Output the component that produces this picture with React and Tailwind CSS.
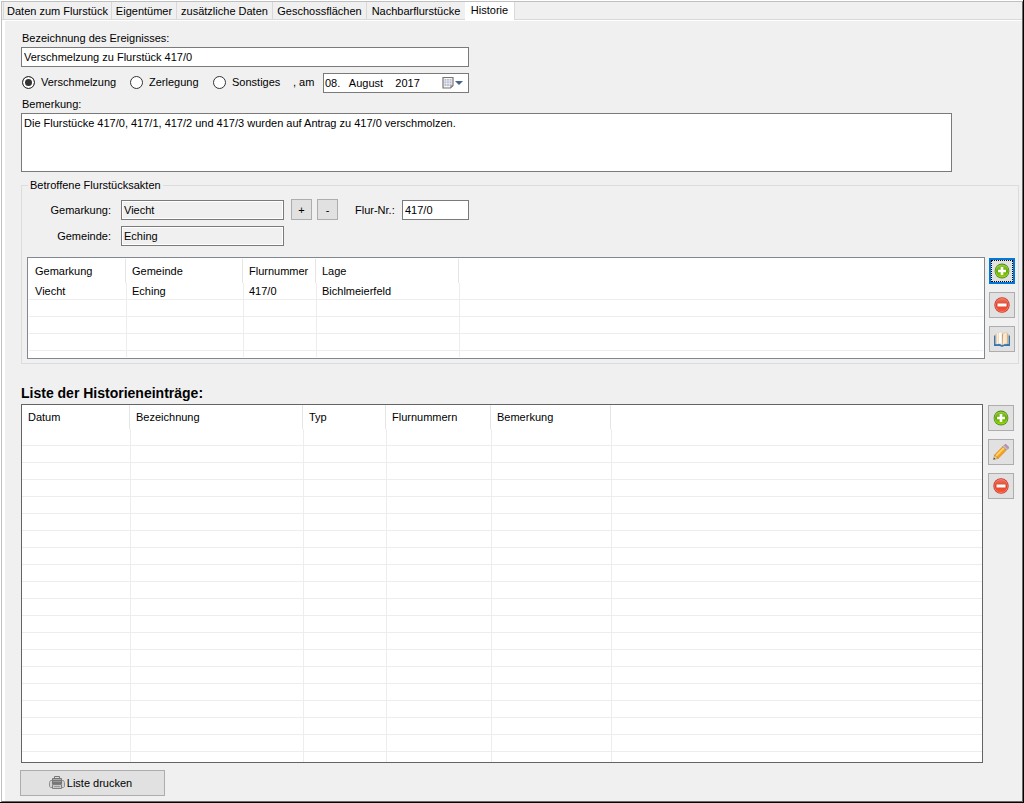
import React from "react";

const tabs = [
  { label: "Daten zum Flurstück", width: "w-[108px]" },
  { label: "Eigentümer", width: "w-[65px]" },
  { label: "zusätzliche Daten", width: "w-[96px]" },
  { label: "Geschossflächen", width: "w-[94px]" },
  { label: "Nachbarflurstücke", width: "w-[99px]" },
  { label: "Historie", width: "w-[50px]", active: true },
];

const parcelColumns = [
  { label: "Gemarkung", width: "w-[97px]" },
  { label: "Gemeinde", width: "w-[117px]" },
  { label: "Flurnummer", width: "w-[73px]" },
  { label: "Lage", width: "w-[143px]" },
];

const historyColumns = [
  { label: "Datum", width: "w-[108px]" },
  { label: "Bezeichnung", width: "w-[173px]" },
  { label: "Typ", width: "w-[83px]" },
  { label: "Flurnummern", width: "w-[105px]" },
  { label: "Bemerkung", width: "w-[120px]" },
];

function PlusIcon() {
  return (
    <svg width="16" height="16" viewBox="0 0 16 16" aria-hidden="true">
      <defs>
        <linearGradient id="plusFill" x1="0" y1="0" x2="0" y2="1">
          <stop offset="0" stopColor="#8fc93a" />
          <stop offset="0.5" stopColor="#62a800" />
          <stop offset="1" stopColor="#8fd400" />
        </linearGradient>
      </defs>
      <circle cx="8" cy="8" r="7.4" fill="#4b8a12" />
      <circle cx="8" cy="8" r="6.6" fill="#a5d455" />
      <circle cx="8" cy="8" r="6" fill="url(#plusFill)" />
      <path d="M6.700 4h2.600v2.700H12v2.600H9.300V12H6.700V9.300H4V6.700h2.700z" fill="#fff" />
    </svg>
  );
}

function MinusIcon() {
  return (
    <svg width="16" height="16" viewBox="0 0 16 16" aria-hidden="true">
      <defs>
        <linearGradient id="minusFill" x1="0" y1="0" x2="0" y2="1">
          <stop offset="0" stopColor="#f0735c" />
          <stop offset="0.5" stopColor="#dc432b" />
          <stop offset="1" stopColor="#ff5536" />
        </linearGradient>
      </defs>
      <circle cx="8" cy="8" r="7.7" fill="#c5352a" />
      <circle cx="8" cy="8" r="6.900" fill="#f58673" />
      <circle cx="8" cy="8" r="6.300" fill="url(#minusFill)" />
      <path d="M3.500 6.500h9v3h-9z" fill="#fff" />
    </svg>
  );
}

function BookIcon() {
  return (
    <svg width="16" height="16" viewBox="0 0 16 16" aria-hidden="true">
      <path d="M0 4.500h1.500V13H6l2 1 2-1h4.500V4.500H16V15h-6l-2 1-2-1H0z" fill="#2f78b7" />
      <path d="M1.500 3 4.500 2v10.500l-3 .8zM14.500 3l-2-1v10.500l2 .8z" fill="#d6ae7c" />
      <path d="M2.500 2.500 5 1.500V13l-2.500.3z" fill="#fbeeda" />
      <path d="M4.500 1.500 8 .8V14l-1.500-1.200-2-.3z" fill="#fffdf8" stroke="#dcc3a0" strokeWidth=".5" />
      <path d="M8 3.500 9 2.500V13l-1 1z" fill="#b68d5e" />
      <path d="M9 2.500 13 1.500v11.300l-2.500.2L8.500 14z" fill="#fcf0de" stroke="#d4b48c" strokeWidth=".5" />
      <path d="M11 3v9.500" stroke="#efdabc" strokeWidth=".8" />
    </svg>
  );
}

function PencilIcon() {
  return (
    <svg width="16" height="16" viewBox="0 0 16 16" aria-hidden="true">
      <path d="M.5 15.500 1.600 10.900 5.100 14.400z" fill="#efd2a0" stroke="#a9834f" strokeWidth=".6" />
      <path d="M.4 15.600 1 13.700 2.300 15z" fill="#333" />
      <path d="m1.600 10.900 8.400-8.400 3.500 3.500-8.400 8.400z" fill="#f9a11b" stroke="#c67817" strokeWidth=".6" />
      <path d="m2.500 11.200 7.900-7.900 1.200 1.200-7.900 7.900z" fill="#ffd36b" />
      <path d="m10 2.500 1.500-1.500L15 4.500 13.500 6z" fill="#c3c6cc" stroke="#8c8f96" strokeWidth=".6" />
      <path d="m11.500 1 .5-.5c.8-.7 4.200 2.500 3.500 3.500l-.5.500z" fill="#d49acb" stroke="#9c6a98" strokeWidth=".6" />
    </svg>
  );
}

function PrinterIcon() {
  return (
    <svg width="16" height="16" viewBox="0 0 16 16" aria-hidden="true">
      <path d="M5.500 1.500h5v2h-5z" fill="#ddd" stroke="#777" />
      <path d="M3.500 3.500h9v3h-9z" fill="#aaa" stroke="#777" />
      <path d="M1.500 5.500h13l1 2v4l-1 1h-13l-1-1v-4z" fill="#d2d2d2" stroke="#909090" />
      <path d="M3 5h10v4H3z" fill="#777" />
      <path d="M4 6.500h8" stroke="#999" />
      <path d="M3.500 9.500h9v4h-9z" fill="#c8c8c8" stroke="#808080" />
      <path d="M5 11.500h6" stroke="#999" />
    </svg>
  );
}

function CalendarIcon() {
  return (
    <svg width="22" height="14" viewBox="0 0 22 14" aria-hidden="true">
      <path d="M1 1.500h10v8L8.500 12H1z" fill="#f6f4f4" stroke="#7d7474" strokeWidth="1.200" />
      <path d="M2.500 3h7v7h-7z" fill="#b9bed0" />
      <path d="M2.500 5h7M2.500 7.500h7M4.700 3v7M7.300 3v7" stroke="#eef0f6" strokeWidth=".7" />
      <path d="M8.500 12.300V9.500h2.800z" fill="#8c8080" />
      <path d="M13 5h8l-4 4z" fill="#44648c" />
    </svg>
  );
}

function ToolButton({ label, focused, children }) {
  return (
    <button
      type="button"
      aria-label={label}
      className={
        focused
          ? "flex size-[26px] items-center justify-center border-2 border-[#0078d7] bg-[#e1e1e1] outline-1 -outline-offset-3 outline-dotted outline-black"
          : "flex size-[26px] items-center justify-center border border-[#adadad] bg-[#e1e1e1]"
      }
    >
      {children}
    </button>
  );
}

function ListTable({ label, columns, rows, tail }) {
  return (
    <table aria-label={label} className="w-full table-fixed border-separate border-spacing-0">
      <thead>
        <tr className="h-6">
          {columns.map((c) => (
            <th key={c.label} scope="col" className={`${c.width} border-r border-[#e5e5e5] p-0 pl-1.5 text-left font-normal`}>
              {c.label}
            </th>
          ))}
          <td className="p-0" />
        </tr>
      </thead>
      <tbody>
        {rows.map((row, r) => (
          <tr key={r} className="h-[17px]">
            {[...columns, null].map((c, i) => (
              <td
                key={i}
                className={
                  i === 0
                    ? "border-b border-[#ededed] p-0 pl-1.5"
                    : "border-b border-l border-[#ededed] p-0 pl-[5px]"
                }
              >
                {row[i]}
              </td>
            ))}
          </tr>
        ))}
        <tr className={tail}>
          {[...columns, null].map((c, i) => (
            <td key={i} className={i === 0 ? "p-0" : "border-l border-[#ededed] p-0"} />
          ))}
        </tr>
      </tbody>
    </table>
  );
}

const field = "h-5 border border-[#7a7a7a] bg-white px-0.5 outline-none";
const lockedField = "h-5 w-[163px] border border-[#7a7a7a] bg-[#f0f0f0] px-0.5 shadow-[inset_0_0_0_1px_#fff] outline-none";
const smallButton = "h-[21px] w-[21px] border border-[#adadad] bg-[#e1e1e1] leading-4";

function TypeRadio({ label, checked }) {
  return (
    <label className="flex items-center gap-1.5">
      <input
        type="radio"
        name="typ"
        defaultChecked={checked}
        className="size-[13px] appearance-none rounded-full border border-[#333] bg-white checked:bg-[#333] checked:shadow-[inset_0_0_0_2px_#fff]"
      />
      {label}
    </label>
  );
}

export default function App() {
  return (
    <div className="min-h-screen border-r border-b border-black bg-white pt-px pl-px font-['Liberation_Sans',Arial,sans-serif] text-[11px] leading-4 text-black">
      <div className="border border-t-[#c0c0c0] border-r-[#696969] border-b-[#696969] border-l-[#c0c0c0] bg-[#f0f0f0]">
        <div role="tablist" className="flex h-[18px] border-b border-[#d9d9d9] pl-px">
          {tabs.map((t) => (
            <button
              key={t.label}
              type="button"
              role="tab"
              aria-selected={Boolean(t.active)}
              className={`${t.width} ${
                t.active
                  ? "-mb-px border-r bg-white pb-0.5 leading-4"
                  : "border-l bg-[#f0f0f0] pt-px leading-4"
              } border-[#d9d9d9] whitespace-nowrap`}
            >
              {t.label}
            </button>
          ))}
        </div>

        <main className="border-t border-l-3 border-white pt-[9px] pr-[3px] pb-[5px] pl-4">
          <label htmlFor="ereignis" className="block pl-px">Bezeichnung des Ereignisses:</label>
          <input id="ereignis" type="text" defaultValue="Verschmelzung zu Flurstück 417/0" className={`${field} mt-px block w-[448px]`} />

          <div className="mt-1.5 flex h-5 items-start pl-px">
            <div className="flex w-[108px] pt-px"><TypeRadio label="Verschmelzung" checked /></div>
            <div className="flex w-[83px] pt-px"><TypeRadio label="Zerlegung" /></div>
            <div className="flex w-20 pt-px"><TypeRadio label="Sonstiges" /></div>
            <label htmlFor="datum" className="w-[30px] pt-px">, am</label>
            <div className="flex h-5 w-[146px] items-center border border-[#7a7a7a] bg-white pr-1">
              <input id="datum" type="text" defaultValue="08.   August    2017" className="w-0 flex-1 pl-px outline-none" />
              <button type="button" aria-label="Kalender öffnen"><CalendarIcon /></button>
            </div>
          </div>

          <label htmlFor="bemerkung" className="mt-[3px] block pl-px">Bemerkung:</label>
          <div className="mt-px pr-[67px]">
            <textarea
              id="bemerkung"
              defaultValue="Die Flurstücke 417/0, 417/1, 417/2 und 417/3 wurden auf Antrag zu 417/0 verschmolzen."
              className="block h-[59px] w-full resize-none border border-[#7a7a7a] bg-white px-0.5 py-px outline-none"
            />
          </div>

          <fieldset className="mt-[5px] min-w-0 border border-[#dcdcdc] pr-[3px] pb-1 pl-[5px]">
            <legend className="ml-px px-0.5">Betroffene Flurstücksakten</legend>
            <div className="flex items-end pt-1.5">
              <label htmlFor="gemarkung" className="mr-2.5 w-[84px] pb-0.5 text-right">Gemarkung:</label>
              <input id="gemarkung" type="text" readOnly value="Viecht" className={lockedField} />
              <button type="button" aria-label="Gemarkung hinzufügen" className={`${smallButton} ml-[7px]`}>+</button>
              <button type="button" aria-label="Gemarkung entfernen" className={`${smallButton} ml-[5px]`}>-</button>
              <label htmlFor="flurnr" className="ml-[17px] w-[47px] pb-0.5">Flur-Nr.:</label>
              <input id="flurnr" type="text" defaultValue="417/0" className={`${field} w-[67px]`} />
            </div>
            <div className="mt-1.5 flex items-end">
              <label htmlFor="gemeinde" className="mr-2.5 w-[84px] pb-0.5 text-right">Gemeinde:</label>
              <input id="gemeinde" type="text" readOnly value="Eching" className={lockedField} />
            </div>
            <div className="mt-[11px] flex gap-1">
              <div className="min-w-0 flex-1 border border-[#828790] bg-white p-px">
                <ListTable
                  label="Betroffene Flurstücksakten"
                  columns={parcelColumns}
                  rows={[["Viecht", "Eching", "417/0", "Bichlmeierfeld"], [], [], []]}
                  tail="h-1.5"
                />
              </div>
              <div className="flex flex-col gap-2 pt-px">
                <ToolButton label="Flurstück hinzufügen" focused><PlusIcon /></ToolButton>
                <ToolButton label="Flurstück entfernen"><MinusIcon /></ToolButton>
                <ToolButton label="Akte öffnen"><BookIcon /></ToolButton>
              </div>
            </div>
          </fieldset>

          <h2 className="mt-[19px] mb-px text-[14px] leading-5 font-bold">Liste der Historieneinträge:</h2>
          <div className="flex gap-[5px] pr-[5px]">
            <div className="min-w-0 flex-1 border border-[#646464] bg-white">
              <ListTable
                label="Liste der Historieneinträge"
                columns={historyColumns}
                rows={Array.from({ length: 19 }, () => [])}
                tail="h-2.5"
              />
            </div>
            <div className="flex flex-col gap-2 pt-px">
              <ToolButton label="Eintrag hinzufügen"><PlusIcon /></ToolButton>
              <ToolButton label="Eintrag bearbeiten"><PencilIcon /></ToolButton>
              <ToolButton label="Eintrag entfernen"><MinusIcon /></ToolButton>
            </div>
          </div>

          <button type="button" className="mt-[7px] -ml-px flex h-[26px] w-[145px] items-center justify-center gap-0.5 border border-[#adadad] bg-[#e1e1e1] pr-1">
            <PrinterIcon />
            Liste drucken
          </button>
        </main>
      </div>
    </div>
  );
}
